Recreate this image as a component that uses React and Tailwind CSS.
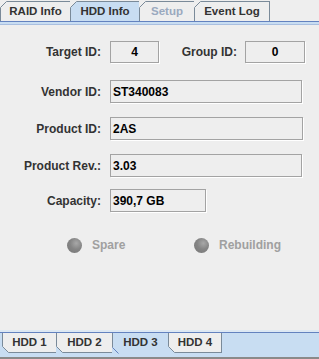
import React from 'react';

const TopTab = ({ label, w, selected, disabled, first }) => (
  <div
    className={`relative h-[20px] flex items-center justify-center text-[11.5px] border-t border-r border-[#7a8a99] ${first ? 'border-l' : ''} ${selected ? 'bg-[#c8ddf2]' : 'bg-[#eeeeee]'} ${disabled ? 'text-[#9aa9bf]' : 'text-[#333333]'}`}
    style={{ width: w }}
  >
    <svg className="absolute -left-px -top-px" width="7" height="7" viewBox="0 0 7 7">
      <polygon points="0,0 7,0 0,7" fill="#eeeeee" />
      <line x1="0.5" y1="6.5" x2="6.5" y2="0.5" stroke="#7a8a99" strokeWidth="1" />
    </svg>
    <span className="pt-[1px]">{label}</span>
  </div>
);

const BottomTab = ({ label, w, selected, first, afterSelected }) => (
  <div
    className={`relative h-[20px] flex items-center justify-center text-[11.5px] ${selected ? 'bg-[#c8ddf2]' : 'bg-[#eeeeee] border-b border-r border-[#7a8a99]'} ${first || afterSelected ? 'border-l' : ''}`}
    style={{ width: w }}
  >
    <svg className="absolute -left-px -bottom-px" width="7" height="7" viewBox="0 0 7 7">
      <polygon points="0,0 0,7 7,7" fill="#c8ddf2" />
      <line x1="0.5" y1="0.5" x2="6.5" y2="6.5" stroke={selected ? '#6382bf' : '#7a8a99'} strokeWidth="1" />
    </svg>
    <span>{label}</span>
  </div>
);

const Field = ({ value, w, h = 23, center }) => (
  <div
    className={`flex items-center border border-[#a3a3a3] shadow-[1px_1px_0_#ffffff] bg-[#eeeeee] text-black ${center ? 'justify-center' : 'pl-[2px]'}`}
    style={{ width: w, height: h }}
  >
    {value}
  </div>
);

const Row = ({ label, children, className = '' }) => (
  <div className={`flex items-center ${className}`}>
    <div className="w-[101px] text-right">{label}</div>
    <div className="ml-[9px]">{children}</div>
  </div>
);

const Led = ({ label }) => (
  <div className="w-[127px] flex items-center">
    <div className="w-[15px] h-[15px] rounded-full bg-[radial-gradient(circle_at_62%_35%,#a8a8a8_0%,#858585_45%,#767676_100%)]" />
    <span className="ml-[10px] text-[#a0a0a0]">{label}</span>
  </div>
);

export default function App() {
  return (
    <div className="w-[319px] h-[359px] bg-[#eeeeee] flex flex-col overflow-hidden font-['Liberation_Sans',Arial,sans-serif] font-bold text-[12px] text-[#333333]">
      <div className="h-[21px] flex items-end">
        <TopTab label="RAID Info" w={71} first />
        <TopTab label="HDD Info" w={69} selected />
        <TopTab label="Setup" w={55} disabled />
        <TopTab label="Event Log" w={75} />
      </div>
      <div className="h-px bg-[#6382bf]" />
      <div className="h-[2px] bg-[#c8ddf2]" />
      <div className="h-px bg-[#a9bfe0]" />

      <div className="flex-1 flex">
        <div className="w-[2px] bg-[#dde8f3]" />
        <div className="flex-1 flex flex-col pt-[16px]">
          <div className="flex items-center">
            <div className="w-[101px] text-right">Target ID:</div>
            <div className="ml-[9px]">
              <Field value="4" w={49} h={22} center />
            </div>
            <div className="w-[78px] text-right">Group ID:</div>
            <div className="ml-[8px]">
              <Field value="0" w={60} h={22} center />
            </div>
          </div>
          <Row label="Vendor ID:" className="mt-[17px]">
            <Field value="ST340083" w={192} />
          </Row>
          <Row label="Product ID:" className="mt-[14px]">
            <Field value="2AS" w={193} />
          </Row>
          <Row label="Product Rev.:" className="mt-[14px]">
            <Field value="3.03" w={192} />
          </Row>
          <Row label="Capacity:" className="mt-[12px]">
            <Field value="390,7 GB" w={96} />
          </Row>
          <div className="mt-[24px] flex items-center pl-[67px]">
            <Led label="Spare" />
            <Led label="Rebuilding" />
          </div>
        </div>
      </div>

      <div className="h-[2px] bg-[#dde8f3]" />
      <div className="h-px bg-[#6382bf]" />
      <div className="h-[24px] bg-[#c8ddf2] flex items-start pl-[2px]">
        <BottomTab label="HDD 1" w={55} first />
        <BottomTab label="HDD 2" w={56} />
        <BottomTab label="HDD 3" w={55} selected />
        <BottomTab label="HDD 4" w={54} afterSelected />
      </div>
      <div className="h-[2px] bg-[#8a8a8a]" />
    </div>
  );
}
